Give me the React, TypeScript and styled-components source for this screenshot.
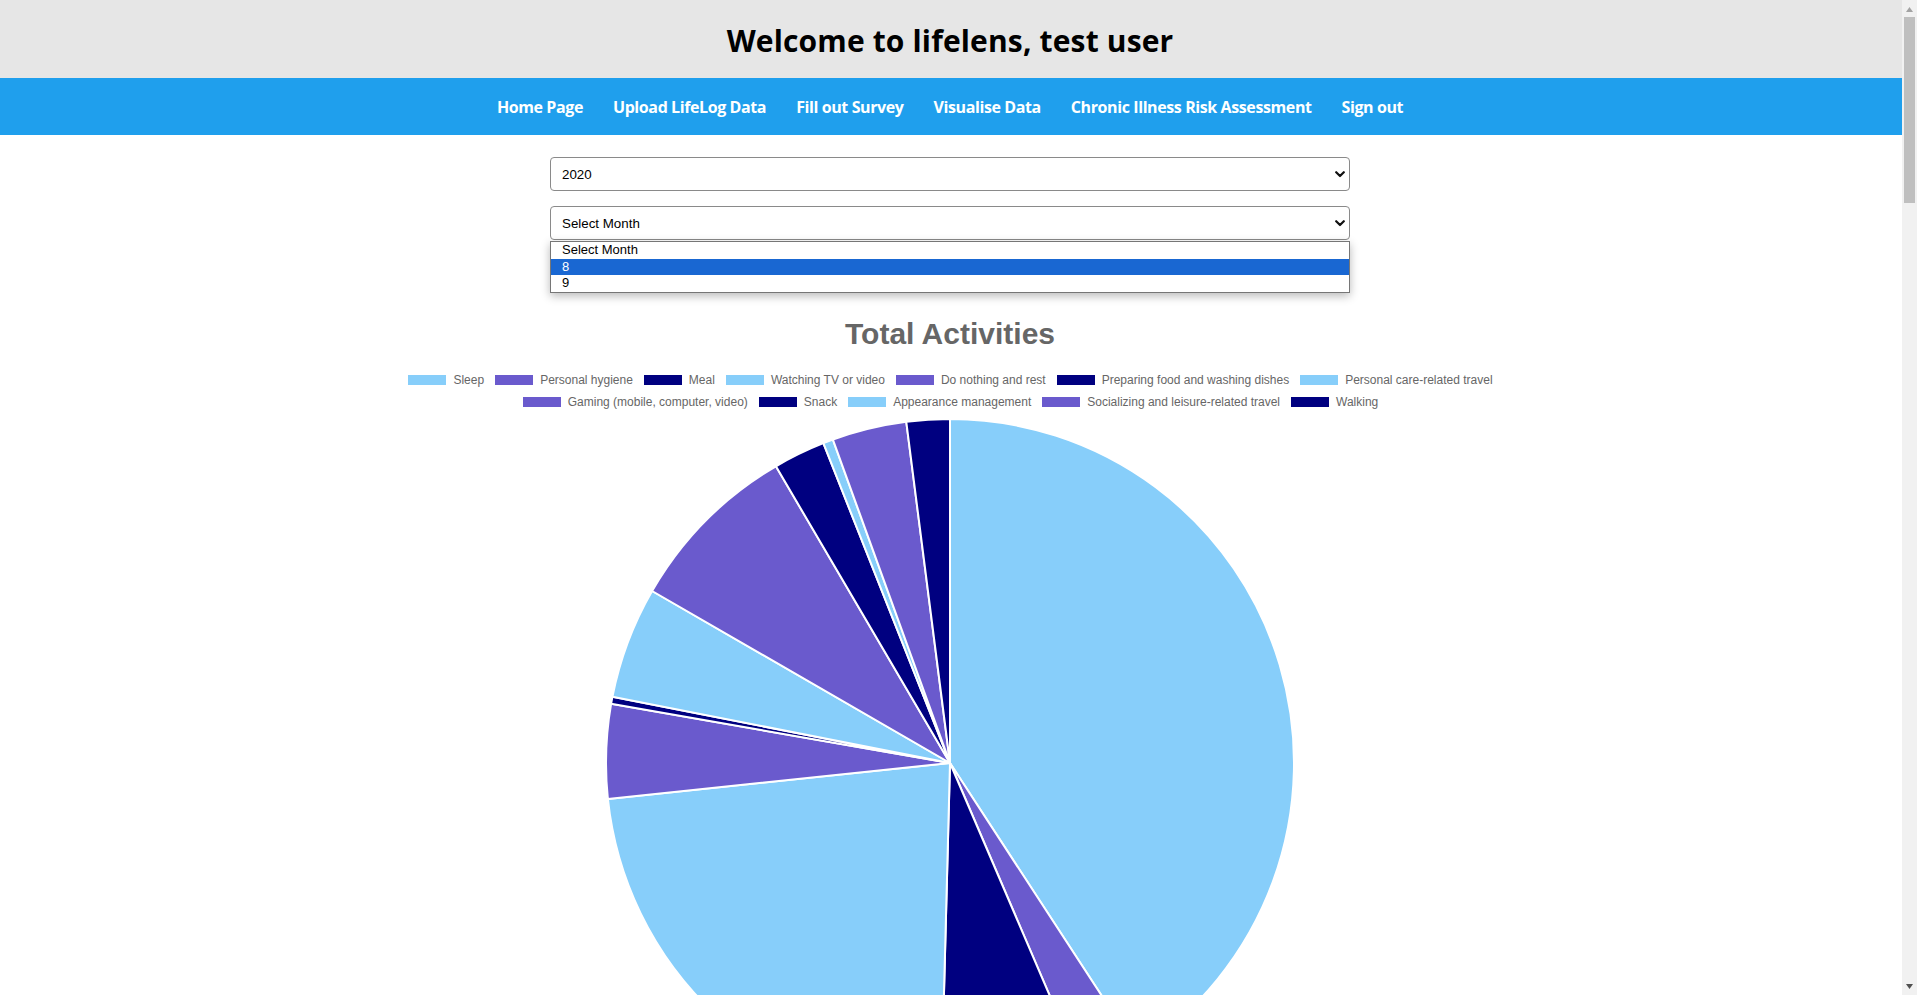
import React from 'react';
import styled, { createGlobalStyle } from 'styled-components';

const GlobalStyle = createGlobalStyle`
  html, body {
    margin: 0;
    padding: 0;
    background: #ffffff;
  }
  body {
    font-family: "Liberation Sans", Arial, sans-serif;
  }
`;

const Header = styled.header`
  background: #e6e6e6;
  height: 78px;
  box-sizing: border-box;
  display: flex;
  align-items: center;
  justify-content: center;
  padding: 3px 17px 0 0;
`;

const WelcomeTitle = styled.h1`
  margin: 0;
  font-family: "Open Sans", "Noto Sans", sans-serif;
  font-weight: 700;
  font-size: 30px;
  line-height: 1;
  color: #000000;
  letter-spacing: 0.15px;
`;

const Nav = styled.nav`
  background: #1f9fed;
  height: 57px;
  display: flex;
  align-items: center;
  justify-content: center;
  gap: 30px;
  padding-right: 17px;
`;

const NavLink = styled.a`
  color: #ffffff;
  font-family: "Open Sans", "Noto Sans", sans-serif;
  font-weight: 700;
  font-size: 16px;
  letter-spacing: -0.4px;
  text-decoration: none;
  cursor: pointer;
`;

const Main = styled.main`
  display: flex;
  flex-direction: column;
  align-items: center;
  padding: 22px 17px 0 0;
  min-height: 5005px;
  box-sizing: border-box;
`;

const SelectWrap = styled.div<{ $gap: number }>`
  position: relative;
  width: 800px;
  margin-bottom: ${(p) => p.$gap}px;
`;

const Select = styled.select`
  display: block;
  width: 800px;
  height: 34px;
  padding: 0 11px;
  appearance: none;
  -webkit-appearance: none;
  background: #ffffff;
  border: 1px solid #8a8a8a;
  border-radius: 4px;
  font-family: "Liberation Sans", Arial, sans-serif;
  font-size: 13.33px;
  color: #000000;
  outline: none;
`;

const Chevron = styled.svg`
  position: absolute;
  right: 5px;
  top: 50%;
  margin-top: -3px;
  pointer-events: none;
`;

const Popup = styled.ul`
  position: absolute;
  top: calc(100% + 1px);
  left: 0;
  right: 0;
  margin: 0;
  padding: 0;
  list-style: none;
  background: #ffffff;
  border: 1px solid #767676;
  box-shadow: 0 3px 9px rgba(0, 0, 0, 0.28);
  z-index: 10;
`;

const PopupOption = styled.li<{ $active?: boolean }>`
  height: 16.6px;
  line-height: 16.6px;
  padding-left: 11px;
  font-family: "Liberation Sans", Arial, sans-serif;
  font-size: 13px;
  background: ${(p) => (p.$active ? '#1967d2' : 'transparent')};
  color: ${(p) => (p.$active ? '#ffffff' : '#000000')};
`;

const ChartSection = styled.section`
  display: flex;
  flex-direction: column;
  align-items: center;
  margin-top: 76px;
`;

const ChartTitle = styled.h2`
  margin: 0;
  font-family: "Liberation Sans", Arial, sans-serif;
  font-weight: 700;
  font-size: 30px;
  line-height: 36px;
  color: #666666;
`;

const Legend = styled.div`
  margin-top: 17px;
  display: flex;
  flex-direction: column;
`;

const LegendRow = styled.div`
  display: flex;
  justify-content: center;
  align-items: center;
  gap: 10px;
  height: 22px;
`;

const LegendItem = styled.div`
  display: flex;
  align-items: center;
  gap: 6px;
  font-family: "Liberation Sans", Arial, sans-serif;
  font-size: 12px;
  line-height: 12px;
  color: #666666;
  white-space: nowrap;
`;

const Swatch = styled.span<{ $color: string }>`
  display: block;
  width: 40px;
  height: 12px;
  box-sizing: border-box;
  border: 1px solid #ffffff;
  background: ${(p) => p.$color};
`;

const PieSvg = styled.svg`
  display: block;
  margin-top: 5px;
`;

const ScrollTrack = styled.div`
  position: fixed;
  top: 0;
  right: 0;
  bottom: 0;
  width: 15px;
  background: #f1f1f1;
  z-index: 20;
`;

const ScrollArrow = styled.svg<{ $bottom?: boolean }>`
  position: absolute;
  left: 4px;
  ${(p) => (p.$bottom ? 'bottom: 6px;' : 'top: 7px;')}
`;

const ScrollThumb = styled.div`
  position: absolute;
  top: 17px;
  left: 2px;
  width: 11px;
  height: 186px;
  background: #bfbfbf;
`;

const LIGHT = '#87cefa';
const SLATE = '#6a5acd';
const NAVY = '#000080';

type Slice = { label: string; value: number; color: string };

const slices: Slice[] = [
  { label: 'Sleep', value: 146.9, color: LIGHT },
  { label: 'Personal hygiene', value: 9.9, color: SLATE },
  { label: 'Meal', value: 24.7, color: NAVY },
  { label: 'Watching TV or video', value: 82.5, color: LIGHT },
  { label: 'Do nothing and rest', value: 15.9, color: SLATE },
  { label: 'Preparing food and washing dishes', value: 1.2, color: NAVY },
  { label: 'Personal care-related travel', value: 18.9, color: LIGHT },
  { label: 'Gaming (mobile, computer, video)', value: 29.6, color: SLATE },
  { label: 'Snack', value: 8.8, color: NAVY },
  { label: 'Appearance management', value: 1.7, color: LIGHT },
  { label: 'Socializing and leisure-related travel', value: 12.6, color: SLATE },
  { label: 'Walking', value: 7.3, color: NAVY },
];

const legendRows = [slices.slice(0, 7), slices.slice(7)];

const SIZE = 690;
const CX = SIZE / 2;
const CY = SIZE / 2;
const R = 344;

function pt(angleDeg: number) {
  const a = (angleDeg * Math.PI) / 180;
  return [CX + R * Math.sin(a), CY - R * Math.cos(a)];
}

function arcPath(a0: number, a1: number) {
  const [x0, y0] = pt(a0);
  const [x1, y1] = pt(a1);
  const large = a1 - a0 > 180 ? 1 : 0;
  return `M ${CX} ${CY} L ${x0.toFixed(2)} ${y0.toFixed(2)} A ${R} ${R} 0 ${large} 1 ${x1.toFixed(2)} ${y1.toFixed(2)} Z`;
}

function PieChart() {
  const total = slices.reduce((s, d) => s + d.value, 0);
  let acc = 0;
  return (
    <PieSvg width={SIZE} height={SIZE} viewBox={`0 0 ${SIZE} ${SIZE}`}>
      {slices.map((s) => {
        const a0 = (acc / total) * 360;
        acc += s.value;
        const a1 = (acc / total) * 360;
        return (
          <path
            key={s.label}
            d={arcPath(a0, a1)}
            fill={s.color}
            stroke="#ffffff"
            strokeWidth={2}
            strokeLinejoin="bevel"
          />
        );
      })}
    </PieSvg>
  );
}

function SelectChevron() {
  return (
    <Chevron width="10" height="7" viewBox="0 0 10 7">
      <path d="M1.2 1.2 L5 5 L8.8 1.2" fill="none" stroke="#111111" strokeWidth="2.2" strokeLinecap="round" strokeLinejoin="round" />
    </Chevron>
  );
}

const navItems = [
  'Home Page',
  'Upload LifeLog Data',
  'Fill out Survey',
  'Visualise Data',
  'Chronic Illness Risk Assessment',
  'Sign out',
];

export default function App() {
  return (
    <>
      <GlobalStyle />
      <Header>
        <WelcomeTitle>Welcome to lifelens, test user</WelcomeTitle>
      </Header>
      <Nav>
        {navItems.map((n) => (
          <NavLink key={n}>{n}</NavLink>
        ))}
      </Nav>
      <Main>
        <SelectWrap $gap={15}>
          <Select defaultValue="2020">
            <option value="2020">2020</option>
          </Select>
          <SelectChevron />
        </SelectWrap>
        <SelectWrap $gap={0}>
          <Select defaultValue="">
            <option value="">Select Month</option>
            <option value="8">8</option>
            <option value="9">9</option>
          </Select>
          <SelectChevron />
          <Popup>
            <PopupOption>Select Month</PopupOption>
            <PopupOption $active>8</PopupOption>
            <PopupOption>9</PopupOption>
          </Popup>
        </SelectWrap>
        <ChartSection>
          <ChartTitle>Total Activities</ChartTitle>
          <Legend>
            {legendRows.map((row, i) => (
              <LegendRow key={i}>
                {row.map((s) => (
                  <LegendItem key={s.label}>
                    <Swatch $color={s.color} />
                    {s.label}
                  </LegendItem>
                ))}
              </LegendRow>
            ))}
          </Legend>
          <PieChart />
        </ChartSection>
      </Main>
      <ScrollTrack>
        <ScrollArrow width="7" height="5" viewBox="0 0 7 5">
          <path d="M0 5 L3.5 0 L7 5 Z" fill="#a3a3a3" />
        </ScrollArrow>
        <ScrollThumb />
        <ScrollArrow $bottom width="7" height="5" viewBox="0 0 7 5">
          <path d="M0 0 L3.5 5 L7 0 Z" fill="#505050" />
        </ScrollArrow>
      </ScrollTrack>
    </>
  );
}
